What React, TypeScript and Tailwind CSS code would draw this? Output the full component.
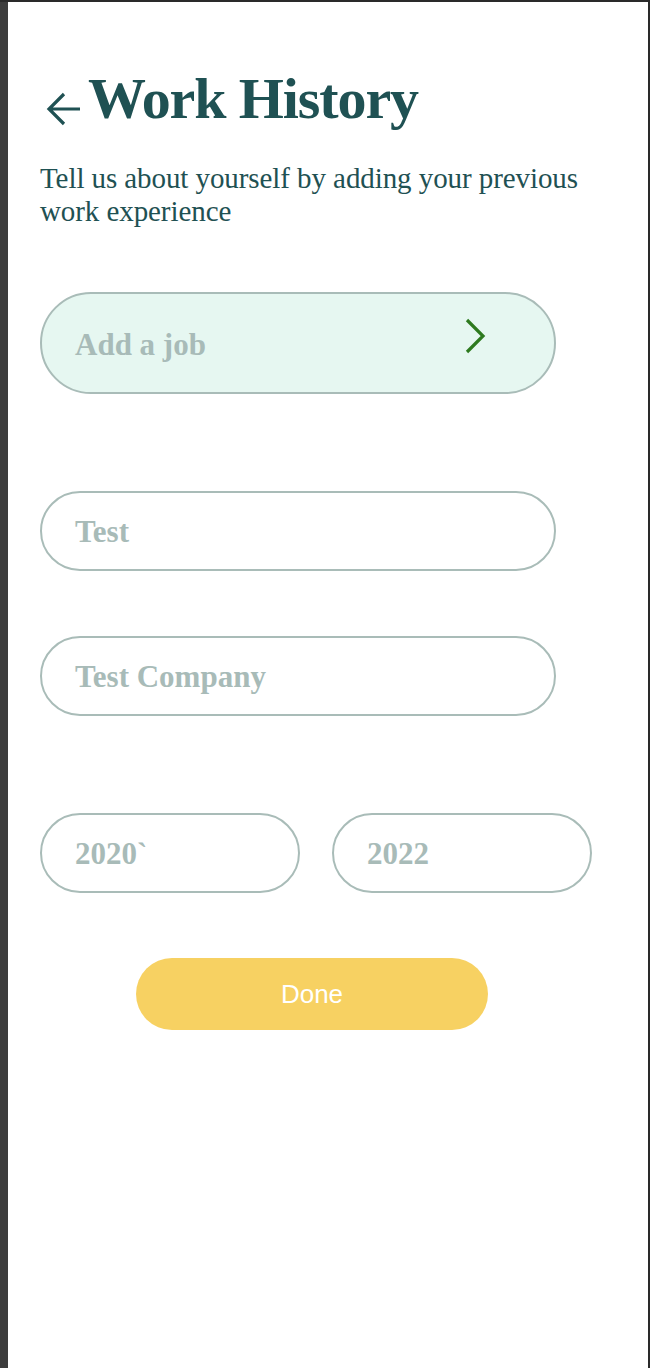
import React from "react";

const serif = { fontFamily: '"Liberation Serif", "Times New Roman", serif' };

function Field({ label, className = "" }: { label: string; className?: string }) {
  return (
    <div
      className={`flex h-[80px] items-center rounded-full border-2 border-[#a9bcb8] bg-white pl-[33px] ${className}`}
    >
      <span className="text-[31px] font-bold leading-none text-[#a8bbb8]" style={serif}>
        {label}
      </span>
    </div>
  );
}

export default function App() {
  return (
    <div className="min-h-[1368px] bg-[#2a2a2a] pt-[2px] pr-[2px]">
      <div className="flex min-h-[1366px]">
        <div className="w-[8px] shrink-0 bg-[#3d3d3d]" />
        <div className="flex-1 bg-white pl-[32px]">
          <div className="mt-[69px] flex items-center">
            <svg width="36" height="36" viewBox="0 0 36 36" className="mt-[20px] ml-[6px] mr-[6px]">
              <path
                d="M34 18 L3 18 M18 3 L3 18 L18 33"
                fill="none"
                stroke="#1f5153"
                strokeWidth="3.2"
                strokeLinecap="butt"
                strokeLinejoin="miter"
              />
            </svg>
            <h1
              className="text-[58px] font-bold leading-[56px] tracking-[-1.1px] text-[#1f5153]"
              style={serif}
            >
              Work History
            </h1>
          </div>
          <p
            className="mt-[35px] w-[560px] text-[29px] leading-[33px] tracking-[-0.08px] text-[#1f5153]"
            style={serif}
          >
            Tell us about yourself by adding your previous work experience
          </p>

          <div className="mt-[64px] flex h-[102px] w-[516px] items-center justify-between rounded-full border-2 border-[#a9bcb8] bg-[#e6f7f1] pl-[33px] pr-[68px]">
            <span className="mt-[3px] text-[31px] font-bold leading-none text-[#a8bbb8]" style={serif}>
              Add a job
            </span>
            <svg width="22" height="36" viewBox="0 0 22 36" className="-mt-[14px]">
              <path d="M3 2 L19 18 L3 34" fill="none" stroke="#2e7a1f" strokeWidth="3.2" />
            </svg>
          </div>

          <Field label="Test" className="mt-[97px] w-[516px]" />
          <Field label="Test Company" className="mt-[65px] w-[516px]" />

          <div className="mt-[97px] flex gap-[32px]">
            <Field label="2020`" className="w-[260px]" />
            <Field label="2022" className="w-[260px]" />
          </div>

          <button
            className="mt-[65px] ml-[96px] flex h-[72px] w-[352px] items-center justify-center rounded-full bg-[#f7d162] text-[26px] text-white"
            style={{ fontFamily: '"Liberation Sans", Arial, sans-serif' }}
          >
            Done
          </button>
        </div>
      </div>
    </div>
  );
}
